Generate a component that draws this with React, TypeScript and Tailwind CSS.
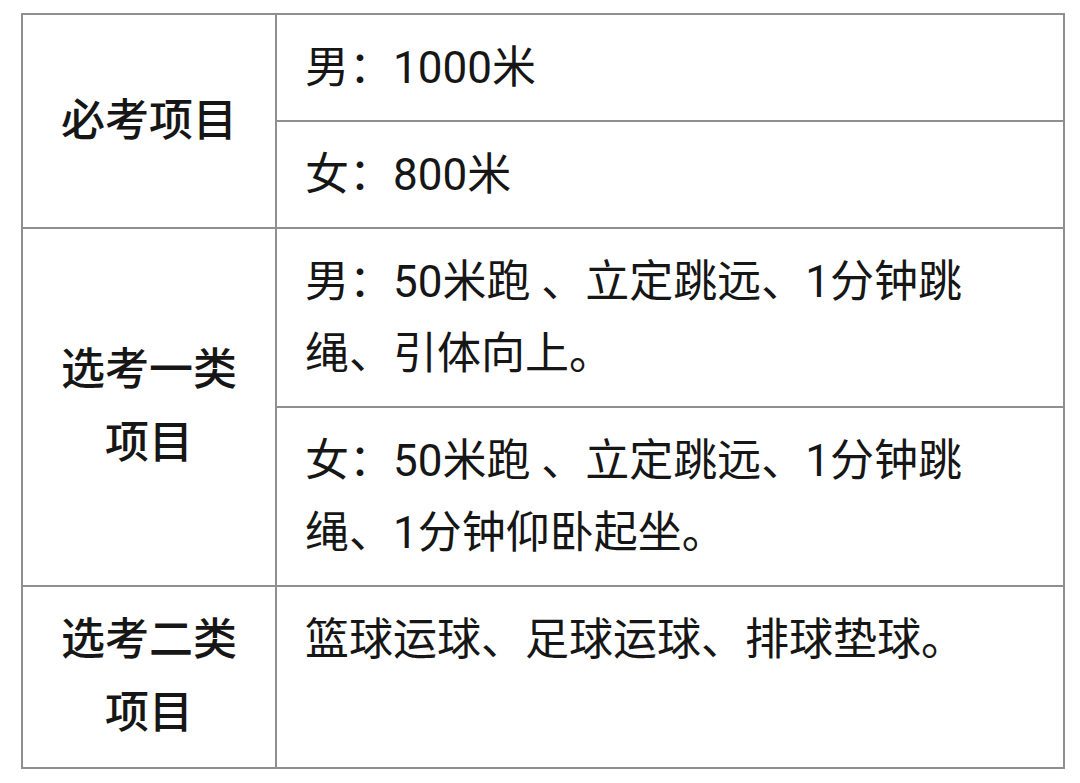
const font = { fontFamily: '"Roboto", "Noto Sans CJK SC", sans-serif' };

const rows = [
  {
    head: ["必考项目"],
    items: [["男：1000米"], ["女：800米"]],
  },
  {
    head: ["选考一类", "项目"],
    items: [
      ["男：50米跑 、立定跳远、1分钟跳", "绳、引体向上。"],
      ["女：50米跑 、立定跳远、1分钟跳", "绳、1分钟仰卧起坐。"],
    ],
  },
  {
    head: ["选考二类", "项目"],
    items: [["篮球运球、足球运球、排球垫球。"]],
  },
];

const cell = "border-2 border-[#8f8f8f]";

export default function App() {
  return (
    <div className="min-h-screen bg-white pl-[21px] pt-[13px]" style={font}>
      <table className="w-[1044px] border-collapse text-[44px] leading-[72px] text-[#161616]">
        <tbody>
          {rows.map((row) =>
            row.items.map((item, i) => (
              <tr key={row.head.join() + i}>
                {i === 0 && (
                  <td
                    rowSpan={row.items.length}
                    className={`${cell} w-[254px] py-[17px] text-center align-middle font-medium`}
                  >
                    {row.head.map((line) => (
                      <div key={line} className="leading-[73px]">
                        {line}
                      </div>
                    ))}
                  </td>
                )}
                <td className={`${cell} pl-[28px] pr-4 pt-[17px] pb-[16px] align-top`}>
                  {item.map((line) => (
                    <div key={line} className="whitespace-pre">
                      {line}
                    </div>
                  ))}
                </td>
              </tr>
            ))
          )}
        </tbody>
      </table>
    </div>
  );
}
